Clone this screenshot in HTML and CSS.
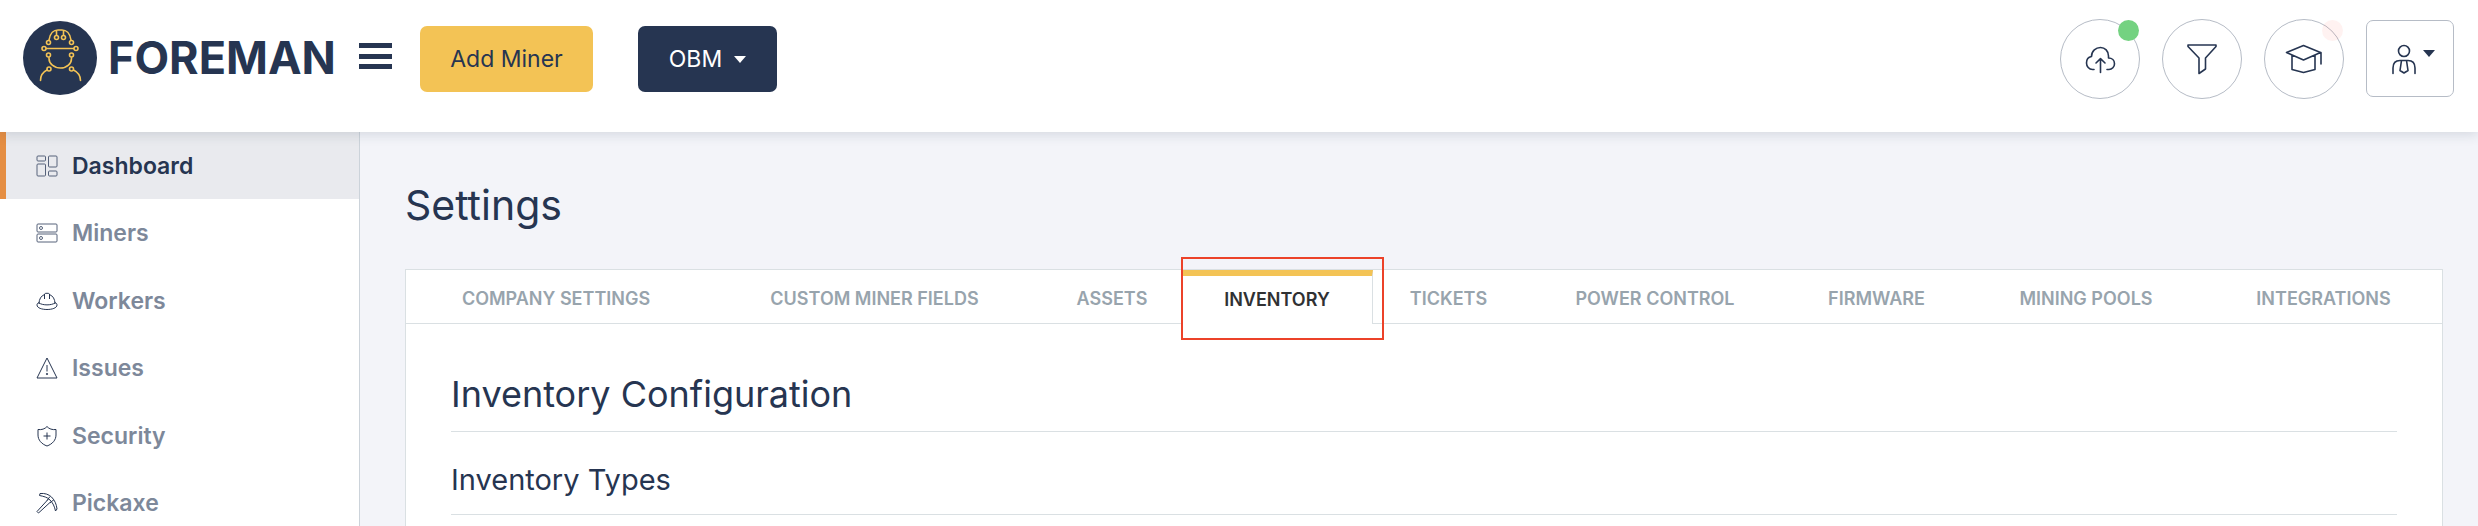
FILE: index.html
```html
<!DOCTYPE html>
<html lang="en">
<head>
<meta charset="utf-8">
<meta name="viewport" content="width=device-width, initial-scale=1">
<title>Foreman - Settings</title>
<link rel="stylesheet" href="styles.css">
</head>
<body>
<header class="topbar">
  <a class="brand" href="#">
    <svg class="brand-mark" viewBox="0 0 74 74" aria-hidden="true">
      <circle cx="37" cy="37" r="37" fill="#263551"/>
      <g fill="none" stroke="#f3c355" stroke-width="1.6" stroke-linecap="round">
        <path d="M26 19C27 12 31 9 35 9h4c4 0 8 3 9 10M33.500 9.500v5M40.500 9.500v5M23 27.500h28M26 36.500v1c0 5 5 9.500 11.500 9.500S48.500 42.500 48.500 37.500v-1M24 49c-4 2-6.500 5-6.500 10.500M50.500 49c4 2 7 5 7 10.500"/>
        <g fill="#263551">
          <circle cx="25.500" cy="21.500" r="2"/><circle cx="48.500" cy="21.500" r="2"/>
          <circle cx="33.500" cy="16.500" r="2"/><circle cx="40.500" cy="16.500" r="2"/>
          <circle cx="21" cy="27.500" r="2"/><circle cx="53" cy="27.500" r="2"/>
          <circle cx="25.500" cy="34" r="2"/><circle cx="48.500" cy="34" r="2"/>
          <circle cx="26" cy="48" r="2"/><circle cx="48.500" cy="48" r="2"/>
        </g>
      </g>
    </svg>
    <span class="brand-name">FOREMAN</span>
  </a>
  <button class="menu-toggle" type="button" aria-label="Toggle menu"><span></span><span></span><span></span></button>
  <button class="btn btn-primary" type="button">Add Miner</button>
  <button class="btn btn-dark" type="button" aria-haspopup="true">OBM <span class="caret"></span></button>
  <div class="actions">
    <button class="round" type="button" aria-label="Uploads">
      <svg class="icon" viewBox="0 0 32 32" aria-hidden="true"><path d="M10 26.500H8.500C5 26.500 2.500 23.500 2.500 20c0-3.500 2-6 5-6.500C7.500 8 12 4.500 16.500 4.500c4.500 0 8 3.500 8 8.500v2c3.500 0 6 2.500 6 5.700s-2.500 5.800-5.500 5.800h-2M16.500 29.500V16M12 20l4.500-4.300L21 20"/></svg>
      <span class="badge badge-ok"></span>
    </button>
    <button class="round" type="button" aria-label="Filter">
      <svg class="icon" viewBox="0 0 32 32" aria-hidden="true"><path d="M2 2h28v1.500L19.500 15v11L13 30.500V15L2 3.500z"/></svg>
    </button>
    <button class="round" type="button" aria-label="Academy">
      <svg class="icon icon-wide" viewBox="0 0 38 32" aria-hidden="true"><path d="M18.500 2.500L1.500 9.500l17 7.500 17-7.500zM7 12v14.500l11.500 3 11.500-3V12M36 9.500V21"/></svg>
      <span class="badge badge-soft"></span>
    </button>
    <button class="account" type="button" aria-label="Account" aria-haspopup="true">
      <svg class="icon icon-user" viewBox="0 0 26 32" aria-hidden="true"><circle cx="13" cy="8" r="5.500"/><path d="M2 30.500V25c0-5 3-7.500 7-7.500h8c4 0 7 2.500 7 7.500v5.500M10.500 17.500h5l1.500 10-4 2.500-4-2.500z"/></svg>
      <span class="caret"></span>
    </button>
  </div>
</header>
<div class="shell">
  <nav class="sidebar" aria-label="Main">
    <a class="nav-item active" href="#" aria-current="page">
      <svg class="nav-icon" viewBox="0 0 22 22" aria-hidden="true"><rect x="1" y="1" width="8.500" height="5" rx="1"/><rect x="1" y="9" width="8.500" height="12" rx="1"/><rect x="12.500" y="1" width="8.500" height="11" rx="1"/><rect x="12.500" y="16" width="8.500" height="5" rx="1"/></svg>Dashboard</a>
    <a class="nav-item" href="#">
      <svg class="nav-icon" viewBox="0 0 22 22" aria-hidden="true"><rect x="1" y="2" width="20" height="8" rx="1"/><rect x="1" y="12" width="20" height="8" rx="1"/><circle cx="5" cy="6" r="1.500"/><circle cx="5" cy="16" r="1.500"/></svg>Miners</a>
    <a class="nav-item" href="#">
      <svg class="nav-icon dark" viewBox="0 0 22 22" aria-hidden="true"><path d="M3 14C3 9 5 6 8.500 4.500M19 14c0-5-2-8-5.500-9.500M8.500 9V4c0-1 5-1 5 0v5M3 12.500C1.500 13 1 14 1 15c0 3 5 4.500 10 4.500S21 18 21 15c0-1-.5-2-2-2.500M3 13c4 2.500 12 2.500 16 0"/></svg>Workers</a>
    <a class="nav-item" href="#">
      <svg class="nav-icon dark" viewBox="0 0 22 22" aria-hidden="true"><path d="M11 1L1 21h20zM11 8v6.500"/><circle cx="11" cy="17" r=".7"/></svg>Issues</a>
    <a class="nav-item" href="#">
      <svg class="nav-icon dark" viewBox="0 0 22 22" aria-hidden="true"><path d="M11 1.500c2 2.500 5.500 3.500 9 3V10c0 5-3.500 9-9 11-5.500-2-9-6-9-11V4.500c3.500.5 7-.5 9-3zM11 7.500v7M7.500 11h7"/></svg>Security</a>
    <a class="nav-item" href="#">
      <svg class="nav-icon dark" viewBox="0 0 22 22" aria-hidden="true"><path d="M4 1.500c5-.5 9 1 11.500 3.500 3 3 5 7 5.500 12l-1.500 2C18.500 14.500 17 11 14 8S8 4.500 3.500 3.500zM12 7.500l-11 12L2.500 21l12-11M11 8.500l3-4M14 11l4-3.500"/></svg>Pickaxe</a>
  </nav>
  <main class="main">
    <h1 class="page-title">Settings</h1>
    <section class="card">
      <div class="tabs" role="tablist">
        <button class="tab" role="tab" type="button">COMPANY SETTINGS</button>
        <button class="tab" role="tab" type="button">CUSTOM MINER FIELDS</button>
        <button class="tab" role="tab" type="button">ASSETS</button>
        <button class="tab selected" role="tab" type="button" aria-selected="true">INVENTORY<span class="highlight"></span></button>
        <button class="tab" role="tab" type="button">TICKETS</button>
        <button class="tab" role="tab" type="button">POWER CONTROL</button>
        <button class="tab" role="tab" type="button">FIRMWARE</button>
        <button class="tab" role="tab" type="button">MINING POOLS</button>
        <button class="tab" role="tab" type="button">INTEGRATIONS</button>
      </div>
      <div class="panel" role="tabpanel">
        <h2 class="panel-title">Inventory Configuration</h2>
        <h3 class="panel-subtitle">Inventory Types</h3>
      </div>
    </section>
  </main>
</div>
</body>
</html>
```
FILE: styles.css
```css
:root {
  --navy: #263551;
  --yellow: #f3c355;
  --line: #dae0e3;
  --outline: #b6bcc6;
}
* { box-sizing: border-box; }
body {
  margin: 0;
  min-height: 100vh;
  display: flex;
  flex-direction: column;
  overflow: hidden;
  background: #f3f4f9;
  color: var(--navy);
  font-family: Inter, "Open Sans", sans-serif;
}
button { font: inherit; color: inherit; cursor: pointer; }
a { color: inherit; text-decoration: none; }

.topbar {
  position: relative;
  z-index: 1;
  display: flex;
  align-items: flex-start;
  height: 132px;
  padding: 19px 24px 0 23px;
  background: #fff;
  box-shadow: 0 2px 12px rgba(38, 53, 81, 0.16);
}
.brand { display: flex; align-items: center; gap: 11px; width: 336px; height: 78px; }
.brand-mark { width: 74px; height: 74px; }
.brand-name { font-size: 45px; font-weight: 700; line-height: 50px; }
.menu-toggle {
  display: flex;
  flex-direction: column;
  justify-content: space-between;
  width: 33px;
  height: 26px;
  margin: 24px 28px 0 0;
  padding: 0;
  border: 0;
  background: none;
}
.menu-toggle span { height: 5px; background: var(--navy); }
.btn {
  display: flex;
  align-items: center;
  justify-content: center;
  gap: 12px;
  height: 66px;
  margin: 7px 45px 0 0;
  border: 0;
  border-radius: 7px;
  font-size: 23px;
}
.btn-primary { width: 173px; background: var(--yellow); }
.btn-dark { width: 139px; background: var(--navy); color: #fff; }
.caret { border: 6px solid transparent; border-top: 7px solid currentColor; border-bottom: 0; }

.actions { display: flex; gap: 22px; margin-left: auto; }
.round {
  position: relative;
  display: grid;
  place-items: center;
  width: 80px;
  height: 80px;
  padding: 0;
  border: 1px solid var(--outline);
  border-radius: 50%;
  background: #fff;
}
.badge { position: absolute; top: 0; right: 0; width: 21px; height: 21px; border-radius: 50%; }
.badge-ok { background: #74d281; }
.badge-soft { background: rgba(255, 90, 80, 0.08); }
.account {
  display: flex;
  align-items: center;
  justify-content: center;
  gap: 6px;
  width: 88px;
  height: 77px;
  margin-top: 1px;
  padding: 0 0 0 6px;
  border: 1px solid var(--outline);
  border-radius: 7px;
  background: #fff;
}
.account .caret { margin-bottom: 10px; }
.icon { width: 32px; height: 32px; fill: none; stroke: var(--navy); stroke-width: 1.6; stroke-linejoin: round; stroke-linecap: round; }
.icon-wide { width: 38px; }
.icon-user { width: 26px; }

.shell { display: flex; flex: 1; }
.sidebar {
  display: grid;
  grid-auto-rows: 67px 68px;
  align-content: start;
  width: 360px;
  flex: none;
  border-right: 1px solid #ccd3da;
  background: #fff;
}
.nav-item {
  display: flex;
  align-items: center;
  gap: 14px;
  padding-left: 36px;
  color: #7d889a;
  font-size: 23px;
  font-weight: 600;
}
.nav-item.active { padding-left: 30px; border-left: 6px solid #e58e43; background: #e9eaee; color: var(--navy); }
.nav-icon { width: 22px; height: 22px; fill: none; stroke: #56627a; stroke-width: 1; }
.nav-icon.dark { stroke: var(--navy); }

.main { flex: 1; display: flex; flex-direction: column; min-width: 0; padding: 49px 35px 0 45px; }
.page-title { margin: 0 0 40px; font-size: 41px; font-weight: 400; line-height: 48px; }
.card { flex: 1; border: 1px solid var(--line); border-bottom: 0; background: #fff; }
.tabs { display: grid; grid-template-columns: 300fr 337fr 138fr 192fr 151fr 262fr 181fr 238fr 237fr; }
.tab {
  height: 54px;
  padding: 4px 0 0;
  border: 0;
  border-bottom: 1px solid var(--line);
  background: none;
  color: #98a4ad;
  font-size: 18px;
  font-weight: 600;
  white-space: nowrap;
}
.tab.selected {
  position: relative;
  padding: 0 0 1px;
  border: 1px solid var(--line);
  border-top: 6px solid var(--yellow);
  border-bottom: 0;
  color: #303133;
}
.highlight { position: absolute; inset: -19px -12px -16px -1px; border: 2px solid #ec4229; }
.panel { padding: 46px 45px 0; }
.panel-title, .panel-subtitle { margin: 0; border-bottom: 1px solid var(--line); font-weight: 400; }
.panel-title { padding-bottom: 13px; font-size: 36px; line-height: 48px; }
.panel-subtitle { padding: 29px 0 16px; font-size: 29px; line-height: 37px; }
```
